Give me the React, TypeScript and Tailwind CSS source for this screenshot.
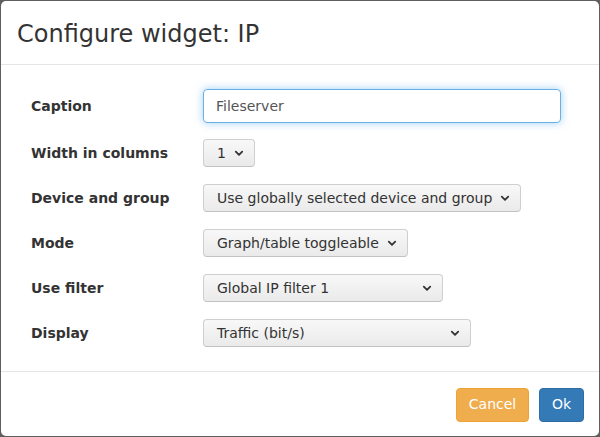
import React from 'react';

const Chevron = () => (
  <svg width="10" height="7" viewBox="0 0 10 7" className="ml-[5px] shrink-0">
    <path d="M1.8 1.6 L5 4.8 L8.2 1.6" fill="none" stroke="#333" strokeWidth="1.8" strokeLinecap="round" strokeLinejoin="round" />
  </svg>
);

interface SelectProps {
  value: string;
  width?: string;
}

const SelectButton: React.FC<SelectProps> = ({ value, width }) => (
  <button
    className={`h-[28px] flex items-center justify-between pl-[13px] pr-[10px] rounded-[4px] border border-[#cfcfcf] border-b-[#c2c2c2] bg-gradient-to-b from-[#f8f8f8] to-[#eaeaea] text-[14px] text-[#333] ${width ?? ''}`}
  >
    <span className="whitespace-nowrap">{value}</span>
    <Chevron />
  </button>
);

const rows: { label: string; value: string; width?: string }[] = [
  { label: 'Width in columns', value: '1', width: 'w-[52px]' },
  { label: 'Device and group', value: 'Use globally selected device and group', width: 'w-[318px]' },
  { label: 'Mode', value: 'Graph/table toggleable', width: 'w-[205px]' },
  { label: 'Use filter', value: 'Global IP filter 1', width: 'w-[240px]' },
  { label: 'Display', value: 'Traffic (bit/s)', width: 'w-[268px]' },
];

export default function App() {
  return (
    <div
      className="w-[600px] h-[437px] bg-[#5f5f5f] p-px"
      style={{ fontFamily: '"DejaVu Sans", Verdana, sans-serif' }}
    >
      <div className="h-full bg-white rounded-[5px] flex flex-col">
        {/* Header */}
        <div className="h-[64px] flex items-center px-[16px] border-b border-[#e5e5e5]">
          <h4 className="text-[24px] text-[#333] leading-none mt-[2px]">Configure widget: IP</h4>
        </div>

        {/* Body */}
        <div className="flex-1 pt-[24px] pl-[30px] pr-[38px]">
          <div className="flex items-center h-[34px]">
            <label className="w-[172px] font-bold text-[14px] text-[#333]">Caption</label>
            <input
              defaultValue="Fileserver"
              className="flex-1 h-[34px] px-[12px] rounded-[4px] border border-[#66afe9] text-[14px] text-[#555] outline-none shadow-[0_0_8px_rgba(102,175,233,0.6)]"
            />
          </div>
          {rows.map((r, i) => (
            <div key={r.label} className={`flex items-center h-[28px] ${i === 0 ? 'mt-[16px]' : 'mt-[17px]'}`}>
              <label className="w-[172px] font-bold text-[14px] text-[#333]">{r.label}</label>
              <SelectButton value={r.value} width={r.width} />
            </div>
          ))}
        </div>

        {/* Footer */}
        <div className="h-[65px] border-t border-[#e5e5e5] flex items-center justify-end gap-[10px] pr-[15px] pt-px">
          <button className="h-[34px] w-[73px] rounded-[4px] bg-[#f0ad4e] border border-[#eea236] text-white text-[14px]">
            Cancel
          </button>
          <button className="h-[34px] w-[45px] rounded-[4px] bg-[#337ab7] border border-[#2e6da4] text-white text-[14px]">
            Ok
          </button>
        </div>
      </div>
    </div>
  );
}
